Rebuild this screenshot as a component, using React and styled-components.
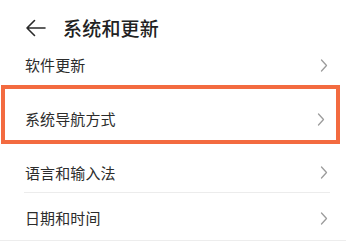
import React from "react";
import styled, { createGlobalStyle } from "styled-components";

const GlobalStyle = createGlobalStyle`
  html, body {
    margin: 0;
    padding: 0;
    background: #ffffff;
  }
  body {
    font-family: "Noto Sans CJK SC", "Noto Sans", sans-serif;
    color: #2a2a2a;
  }
`;

const Page = styled.div`
  width: 346px;
  height: 241px;
  overflow: hidden;
  background: #ffffff;
`;

const Header = styled.div`
  display: flex;
  align-items: center;
  gap: 17px;
  height: 44px;
  padding: 6px 0 0 25px;
`;

const BackIcon = styled.svg`
  width: 21px;
  height: 18px;
  flex: none;
`;

const Title = styled.h1`
  margin: 0;
  font-size: 19px;
  font-weight: 500;
  line-height: 24px;
  color: #222;
  letter-spacing: 0.2px;
`;

const Row = styled.div`
  display: flex;
  align-items: center;
  justify-content: space-between;
  box-sizing: border-box;
  height: ${(p) => p.$h}px;
  padding: ${(p) => p.$top || 0}px 18px 0 25px;
  border-bottom: ${(p) => (p.$line ? "1px solid #ececec" : "none")};
  margin: ${(p) => (p.$line ? "0 16px 0 24px" : "0")};
  padding-left: ${(p) => (p.$line ? 1 : 25)}px;
  padding-right: ${(p) => (p.$line ? 2 : 18)}px;
`;

const Label = styled.span`
  font-size: 15px;
  line-height: 20px;
  color: #2c2c2c;
  letter-spacing: 0.1px;
`;

const Highlight = styled.div`
  box-sizing: border-box;
  height: 59px;
  margin: 5px 6px 0 1px;
  border: 4.5px solid #f36b40;
`;

const InnerRow = styled(Row)`
  padding-left: 20px;
  padding-right: 11px;
`;

const BottomRule = styled.div`
  height: 1px;
  background: #ededed;
`;

function Chevron() {
  return (
    <svg width="8" height="13" viewBox="0 0 8 13" fill="none">
      <path d="M1.5 1L6.5 6.5L1.5 12" stroke="#9c9c9c" strokeWidth="1.3" strokeLinecap="round" strokeLinejoin="round" />
    </svg>
  );
}

export default function App() {
  return (
    <Page>
      <GlobalStyle />
      <Header>
        <BackIcon viewBox="0 0 21 18" fill="none">
          <path d="M20 9H2M9.5 1.5L2 9l7.5 7.5" stroke="#2a2a2a" strokeWidth="1.6" strokeLinecap="round" strokeLinejoin="round" />
        </BackIcon>
        <Title>系统和更新</Title>
      </Header>
      <Row $h={30}>
        <Label>软件更新</Label>
        <Chevron />
      </Row>
      <Highlight>
        <InnerRow $h={50} $top={10}>
          <Label>系统导航方式</Label>
          <Chevron />
        </InnerRow>
      </Highlight>
      <Row $h={49} $top={9} $line>
        <Label>语言和输入法</Label>
        <Chevron />
      </Row>
      <Row $h={47} $top={3}>
        <Label>日期和时间</Label>
        <Chevron />
      </Row>
      <BottomRule />
    </Page>
  );
}
